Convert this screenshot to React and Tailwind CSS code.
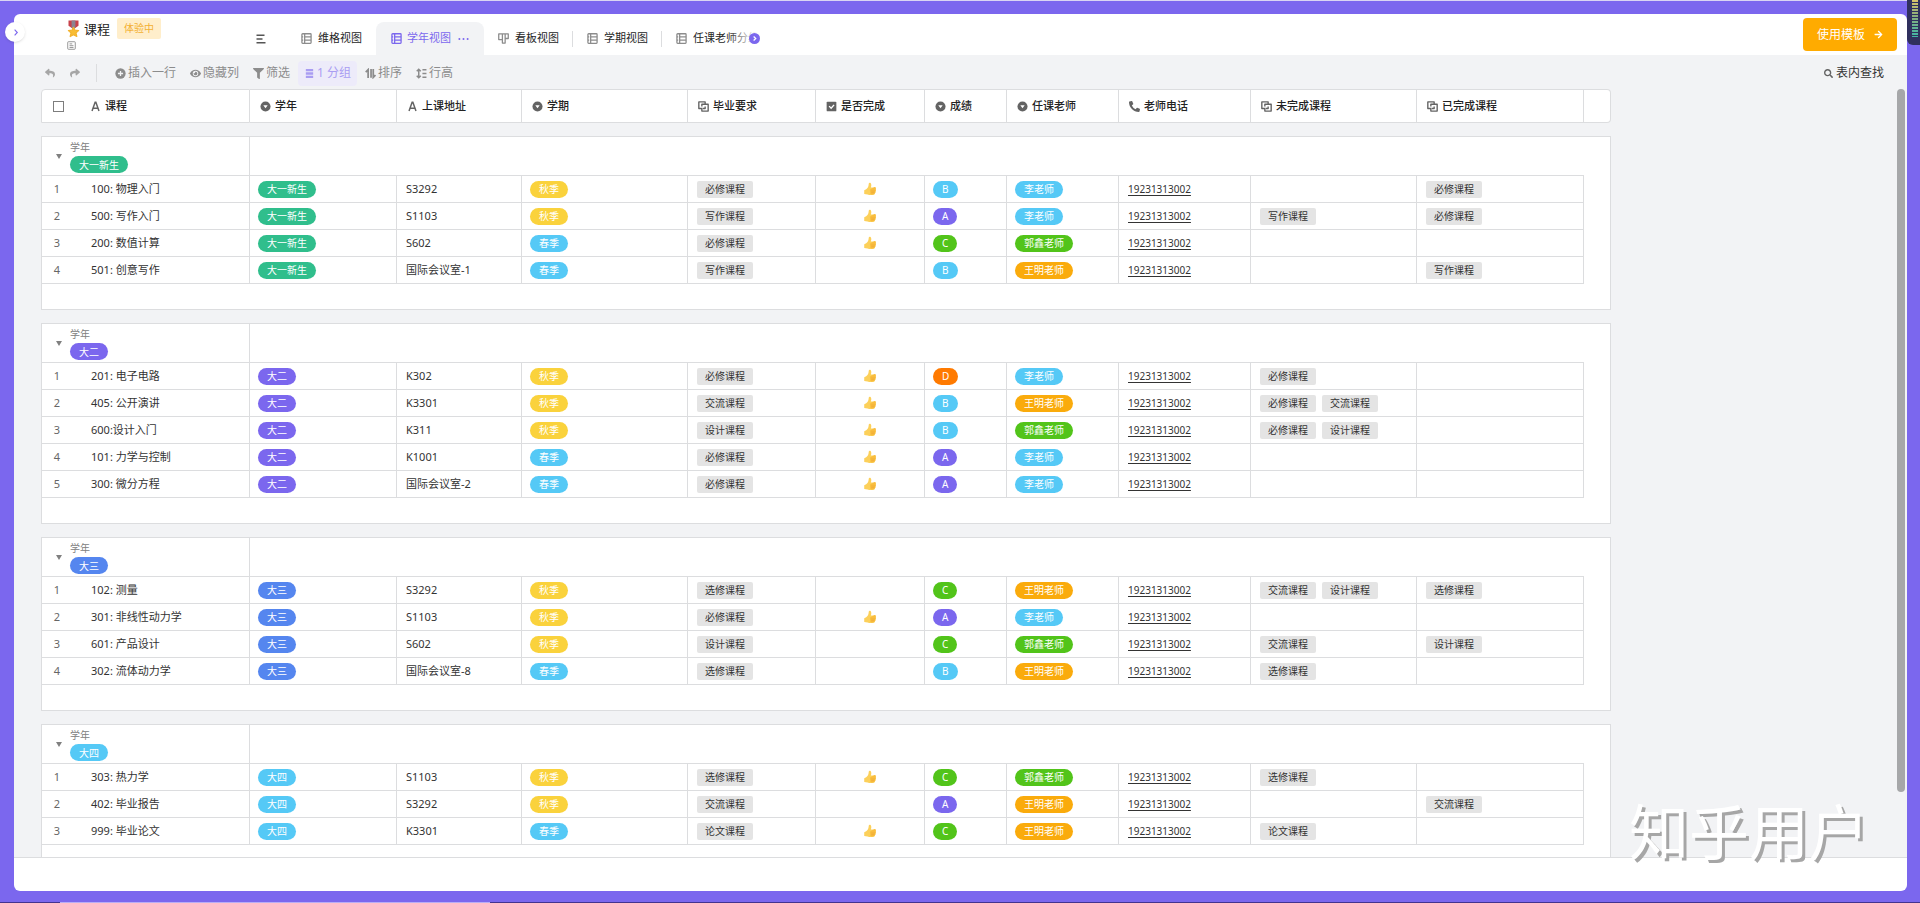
import { Fragment, useState } from "react";
import { FaArrowRight, FaEye, FaFilter, FaPhoneAlt, FaReply, FaSearch, FaShare } from "react-icons/fa";

const COLORS = {
  teal: "bg-[#30be8c]",
  purple: "bg-[#7b67ee]",
  blue: "bg-[#5586ef]",
  cyan: "bg-[#55c9f6]",
  yellow: "bg-[#fad23c]",
  green: "bg-[#52c41a]",
  amber: "bg-[#faab0c]",
  orange: "bg-[#ff7a00]",
};

const TERMS = { 秋季: "yellow", 春季: "cyan" };
const GRADES = { A: "purple", B: "cyan", C: "green", D: "orange" };
const TEACHERS = { 李老师: "cyan", 郭鑫老师: "green", 王明老师: "amber" };

const PHONE = "19231313002";

const COLUMNS = [
  { name: "学年", icon: "select", width: "w-[147px]" },
  { name: "上课地址", icon: "text", width: "w-[125px]" },
  { name: "学期", icon: "select", width: "w-[166px]" },
  { name: "毕业要求", icon: "link", width: "w-[128px]" },
  { name: "是否完成", icon: "check", width: "w-[109px]" },
  { name: "成绩", icon: "select", width: "w-[82px]" },
  { name: "任课老师", icon: "select", width: "w-[112px]" },
  { name: "老师电话", icon: "phone", width: "w-[132px]" },
  { name: "未完成课程", icon: "link", width: "w-[166px]" },
  { name: "已完成课程", icon: "link", width: "w-[167px]" },
];

// [course, room, term, requirement, done, grade, teacher, unfinished, finished]
const GROUPS = [
  {
    year: "大一新生",
    color: "teal",
    rows: [
      ["100: 物理入门", "S3292", "秋季", "必修课程", true, "B", "李老师", [], ["必修课程"]],
      ["500: 写作入门", "S1103", "秋季", "写作课程", true, "A", "李老师", ["写作课程"], ["必修课程"]],
      ["200: 数值计算", "S602", "春季", "必修课程", true, "C", "郭鑫老师", [], []],
      ["501: 创意写作", "国际会议室-1", "春季", "写作课程", false, "B", "王明老师", [], ["写作课程"]],
    ],
  },
  {
    year: "大二",
    color: "purple",
    rows: [
      ["201: 电子电路", "K302", "秋季", "必修课程", true, "D", "李老师", ["必修课程"], []],
      ["405: 公开演讲", "K3301", "秋季", "交流课程", true, "B", "王明老师", ["必修课程", "交流课程"], []],
      ["600:设计入门", "K311", "秋季", "设计课程", true, "B", "郭鑫老师", ["必修课程", "设计课程"], []],
      ["101: 力学与控制", "K1001", "春季", "必修课程", true, "A", "李老师", [], []],
      ["300: 微分方程", "国际会议室-2", "春季", "必修课程", true, "A", "李老师", [], []],
    ],
  },
  {
    year: "大三",
    color: "blue",
    rows: [
      ["102: 测量", "S3292", "秋季", "选修课程", false, "C", "王明老师", ["交流课程", "设计课程"], ["选修课程"]],
      ["301: 非线性动力学", "S1103", "秋季", "必修课程", true, "A", "李老师", [], []],
      ["601: 产品设计", "S602", "秋季", "设计课程", false, "C", "郭鑫老师", ["交流课程"], ["设计课程"]],
      ["302: 流体动力学", "国际会议室-8", "春季", "选修课程", false, "B", "王明老师", ["选修课程"], []],
    ],
  },
  {
    year: "大四",
    color: "cyan",
    rows: [
      ["303: 热力学", "S1103", "秋季", "选修课程", true, "C", "郭鑫老师", ["选修课程"], []],
      ["402: 毕业报告", "S3292", "秋季", "交流课程", false, "A", "王明老师", [], ["交流课程"]],
      ["999: 毕业论文", "K3301", "春季", "论文课程", true, "C", "王明老师", ["论文课程"], []],
    ],
  },
];

const GridIcon = () => (
  <svg viewBox="0 0 12 12" className="size-[11px] shrink-0" fill="none" stroke="currentColor" strokeWidth="1.4">
    <rect x="1" y="0.8" width="10" height="10.4" rx="0.8" />
    <path d="M4 1v10M4 4.2h7M4 7.7h7M1 4.2h1.4M1 7.7h1.4" />
  </svg>
);

const KanbanIcon = () => (
  <svg viewBox="0 0 12 12" className="size-[11px] shrink-0" fill="none" stroke="currentColor" strokeWidth="1.4">
    <path d="M.8 1h4v6.2h-4zM4.8 1h3v10h-3zM7.8 1h3.4v5H7.8z" strokeLinejoin="round" />
  </svg>
);

const ThumbIcon = () => (
  <svg viewBox="0 0 16 16" className="mx-auto size-[14px]" role="img" aria-label="已完成">
    <path
      d="M1.4 9.4c1.6-.6 3-1.4 3.9-2.8C6.4 5 6.3 3.5 6.6 1.7c.2-1.2 2.3-1.1 2.7.5.4 1.6 0 3-.3 4.2h4.3c1.6 0 1.8 1.7.9 2.2.9.6.8 1.9-.1 2.2.5.8.2 1.7-.6 1.9.3 1-.3 1.9-1.3 2-2.2.3-4.8.5-7-.3l-3.8-.6z"
      fill="#fcd05a"
    />
    <path
      d="M8.6 8.4c-.9.5-.9 1.5-.1 1.9-.7.5-.6 1.4.1 1.8-.6.6-.3 1.7.5 2 1.2.4 2.4.1 3.1-.1 1-.1 1.6-1 1.3-1.9.8-.2 1.1-1.1.6-1.9.9-.3 1-1.6.1-2.2.9-.5.7-2-.9-2.2z"
      fill="#f9bd3e"
    />
    <path d="M9.4 10.3h4.3M9.4 12.2h3.8" stroke="#e9a233" strokeWidth=".6" />
  </svg>
);

const MedalIcon = () => (
  <svg viewBox="0 0 13 18" className="h-[18px] w-[13px] shrink-0">
    <path d="M1.5.5h10v5.2L6.5 9.2 1.5 5.7z" fill="#c8414b" />
    <path d="M4.6.5h3.8v7.3L6.5 9.2 4.6 7.8z" fill="#8b8391" />
    <path
      d="M6.5 7.4l1.5 2.8 3.6.4-2.6 2.3.8 3.6-3.3-1.8-3.3 1.8.8-3.6L1.4 10.6l3.6-.4z"
      fill="#f8bd33"
      stroke="#f3b32e"
      strokeWidth="1.2"
      strokeLinejoin="round"
    />
  </svg>
);

function FieldIcon({ type }) {
  if (type === "phone") return <FaPhoneAlt className="size-[11px] shrink-0 text-[#636363]" />;
  return (
    <svg viewBox="0 0 12 12" className="size-[11px] shrink-0 text-[#636363]" fill="none" stroke="currentColor">
      {type === "text" && <path d="M2.2 11L5.6 1.4h.8L9.8 11M3.4 8h5.2" strokeWidth="1.6" />}
      {type === "select" && (
        <>
          <circle cx="6" cy="6" r="5.5" fill="currentColor" stroke="none" />
          <path d="M3.6 4.6h4.8L6 7.8z" fill="#fff" stroke="none" />
        </>
      )}
      {type === "link" && (
        <path d="M5 8.2H.9V1h6.9v2.4M4.2 6V3.6h6.9V11H4.2V8.6M7.8 6v2.2H5.4" strokeWidth="1.5" strokeLinejoin="round" />
      )}
      {type === "check" && (
        <>
          <rect x=".7" y=".7" width="10.6" height="10.6" rx="1" fill="currentColor" stroke="none" />
          <path d="M3.4 5.6l2.2 2.2 3.2-3.6" stroke="#fff" strokeWidth="1.5" />
        </>
      )}
    </svg>
  );
}

const InsertIcon = () => (
  <svg viewBox="0 0 12 12" className="size-[11px] shrink-0">
    <circle cx="6" cy="6" r="5.6" fill="currentColor" />
    <path d="M6 3.2v5.6M3.2 6h5.6" stroke="#f2f3f5" strokeWidth="1.4" />
  </svg>
);

const GroupIcon = () => (
  <svg viewBox="0 0 12 12" className="size-[11px] shrink-0" fill="currentColor">
    <path d="M2 1h8v2.6H2zM2 4.7h8v2.6H2zM2 8.4h8V11H2z" />
  </svg>
);

const SortIcon = () => (
  <svg viewBox="0 0 12 12" className="size-[11px] shrink-0" fill="none" stroke="currentColor" strokeWidth="1.9">
    <path d="M.8 4.4L3.4 1.8V11M6.6 1.2v9.4M9 1v9.2l2.4-2.6" />
  </svg>
);

const RowHeightIcon = () => (
  <svg viewBox="0 0 12 12" className="size-[11px] shrink-0" fill="none" stroke="currentColor" strokeWidth="1.6">
    <path d="M3 1.6v8.8M.8 3.6L3 1.4l2.2 2.2M.8 8.4L3 10.6l2.2-2.2M7 2h4.4M7 6h4.4M7 10h4.4" />
  </svg>
);

const Pill = ({ color, children }) => (
  <span className={`inline-flex h-[17px] items-center rounded-full px-[9px] text-[10px] text-white ${COLORS[color]}`}>
    {children}
  </span>
);

const LinkTags = ({ items }) => (
  <div className="flex gap-1.5">
    {items.map((item) => (
      <span key={item} className="flex h-[17px] items-center rounded-xs bg-[#e4e4e4] px-2 text-[10px] text-[#333]">
        {item}
      </span>
    ))}
  </div>
);

const Cell = ({ className = "px-[9px]", children }) => (
  <td className={`border-r border-b border-[#dcdddf] ${className}`}>{children}</td>
);

function Tab({ name, icon, active, divider, onClick }) {
  if (active) {
    return (
      <button onClick={onClick} className="flex h-[33px] items-center gap-[5px] rounded-t-lg bg-[#f2f3f5] px-[15px] text-[#7b67ee]">
        {icon}
        {name}
        <svg viewBox="0 0 12 4" className="ml-0.5 h-1 w-[11px]" fill="currentColor">
          <circle cx="1.5" cy="2" r="1.1" />
          <circle cx="6" cy="2" r="1.1" />
          <circle cx="10.5" cy="2" r="1.1" />
        </svg>
      </button>
    );
  }
  return (
    <button onClick={onClick} className="relative flex h-[33px] items-center gap-1.5 px-[14px] text-[#262626]">
      <span className="text-[#8c8c8c]">{icon}</span>
      {name}
      {divider && <span className="absolute right-0 h-4 w-px bg-[#dcdddf]" />}
    </button>
  );
}

function Header() {
  const [view, setView] = useState("学年视图");
  const tabs = [
    { name: "维格视图", icon: <GridIcon /> },
    { name: "学年视图", icon: <GridIcon /> },
    { name: "看板视图", icon: <KanbanIcon />, divider: true },
    { name: "学期视图", icon: <GridIcon />, divider: true },
  ];

  return (
    <header className="flex h-[41px] shrink-0 items-end">
      <div className="flex h-full w-[242px] shrink-0 flex-col pt-1 pl-[53px]">
        <div className="flex items-center">
          <MedalIcon />
          <h1 className="ml-1 text-[13px] leading-5 text-[#222]">课程</h1>
          <span className="ml-[7px] flex h-[21px] items-center rounded-xs bg-[#ffeecb] px-[7px] text-[10px] text-[#f3b032]">
            体验中
          </span>
        </div>
        <svg viewBox="0 0 10 10" className="mt-0.5 size-[9px] text-[#8c8c8c]" fill="none" stroke="currentColor">
          <rect x=".8" y=".8" width="8.4" height="8.4" rx=".8" />
          <path d="M2.8 3.2h3M2.8 5.2h4.4M2.8 7.2h4.4" />
        </svg>
      </div>

      <button aria-label="视图列表" className="mr-[21px] flex h-[33px] items-center text-[#555]">
        <svg viewBox="0 0 10 10" className="size-[10px]" stroke="currentColor" strokeWidth="1.4">
          <path d="M.5 1.2h8M.5 5h6M.5 8.8h9" />
        </svg>
      </button>

      <nav className="flex text-[11px]">
        {tabs.map((tab) => (
          <Tab key={tab.name} {...tab} active={view === tab.name} onClick={() => setView(tab.name)} />
        ))}
        <div className="flex h-[33px] items-center gap-1.5 pl-[14px] text-[#262626]">
          <span className="text-[#8c8c8c]">
            <GridIcon />
          </span>
          <div className="relative w-[67px] overflow-hidden whitespace-nowrap">
            任课老师分组
            <div className="absolute inset-y-0 right-0 flex w-8 items-center justify-end bg-linear-to-r from-transparent to-white to-90%">
              <button aria-label="更多视图" className="flex size-[11px] items-center justify-center rounded-full bg-[#7b67ee]">
                <svg viewBox="0 0 8 8" className="size-[7px]" fill="none" stroke="#fff" strokeWidth="1.4">
                  <path d="M3 1.8L5.4 4 3 6.2" />
                </svg>
              </button>
            </div>
          </div>
        </div>
      </nav>

      <button className="mr-[10px] mb-1 ml-auto flex h-[33px] items-center gap-[9px] rounded bg-[#ffab00] px-[14px] text-xs text-white">
        使用模板
        <FaArrowRight className="size-[9px]" />
      </button>
    </header>
  );
}

function Toolbar() {
  const tools = [
    { name: "插入一行", icon: <InsertIcon /> },
    { name: "隐藏列", icon: <FaEye className="size-[11px]" /> },
    { name: "筛选", icon: <FaFilter className="size-[11px]" /> },
    { name: "1 分组", icon: <GroupIcon />, active: true },
    { name: "排序", icon: <SortIcon /> },
    { name: "行高", icon: <RowHeightIcon /> },
  ];

  return (
    <div className="flex h-[34px] shrink-0 items-center pt-0.5 pr-[23px] pl-[31px] text-xs text-[#8c8c8c]">
      <button aria-label="撤销" className="text-[#a6a6a6]">
        <FaReply className="size-[10px]" />
      </button>
      <button aria-label="重做" className="ml-[15px] text-[#a6a6a6]">
        <FaShare className="size-[10px]" />
      </button>
      <span className="mx-4 h-[18px] w-px bg-[#dcdddf]" />
      <div className="-ml-1 flex gap-0.5">
        {tools.map((tool) => (
          <button
            key={tool.name}
            className={`flex h-[25px] items-center gap-0.5 rounded-sm px-1.5 ${
              tool.active ? "bg-[#edebfa] text-[#a99df2]" : ""
            }`}
          >
            {tool.icon}
            {tool.name}
          </button>
        ))}
      </div>
      <button className="ml-auto flex items-center gap-[3px] text-[#333]">
        <FaSearch className="size-[9px] text-[#636363]" />
        表内查找
      </button>
    </div>
  );
}

function Row({ row, index, group }) {
  const [course, room, term, requirement, done, grade, teacher, unfinished, finished] = row;
  return (
    <tr className="h-[27px] bg-white">
      <td className="border-r border-b border-l border-[#dcdddf]">
        <div className="flex">
          <span className="w-[30px] text-center text-[#666]">{index + 1}</span>
          <span className="pl-[19px]">{course}</span>
        </div>
      </td>
      <Cell className="px-2">
        <Pill color={group.color}>{group.year}</Pill>
      </Cell>
      <Cell>{room}</Cell>
      <Cell className="px-2">
        <Pill color={TERMS[term]}>{term}</Pill>
      </Cell>
      <Cell>
        <LinkTags items={[requirement]} />
      </Cell>
      <Cell>{done && <ThumbIcon />}</Cell>
      <Cell className="px-2">
        <Pill color={GRADES[grade]}>{grade}</Pill>
      </Cell>
      <Cell className="px-2">
        <Pill color={TEACHERS[teacher]}>{teacher}</Pill>
      </Cell>
      <Cell className="px-[9px] text-[10px]">
        <a href={`tel:${PHONE}`} className="underline underline-offset-2">
          {PHONE}
        </a>
      </Cell>
      <Cell>
        <LinkTags items={unfinished} />
      </Cell>
      <Cell>
        <LinkTags items={finished} />
      </Cell>
      <td className="border-r border-[#dcdddf]" />
    </tr>
  );
}

function CourseTable() {
  const [collapsed, setCollapsed] = useState([]);

  const toggle = (year) => {
    setCollapsed(collapsed.includes(year) ? collapsed.filter((y) => y !== year) : [...collapsed, year]);
  };

  return (
    <table className="w-[1570px] table-fixed border-separate border-spacing-0 text-[11px] leading-4 text-[#333]">
      <thead>
        <tr className="h-[34px] text-left text-[#222]">
          <th className="w-[209px] rounded-tl border border-[#dcdddf] bg-white p-0 font-medium">
            <div className="flex items-center">
              <span className="flex w-7 justify-end pr-1.5">
                <input
                  type="checkbox"
                  aria-label="全选"
                  className="size-[11px] appearance-none border border-[#7d7d7d] checked:bg-[#7b67ee]"
                />
              </span>
              <span className="flex items-center gap-1 pl-5">
                <FieldIcon type="text" />
                课程
              </span>
            </div>
          </th>
          {COLUMNS.map((col) => (
            <th key={col.name} className={`border-y border-r border-[#dcdddf] bg-white px-[10px] font-medium ${col.width}`}>
              <div className="flex items-center gap-1">
                <FieldIcon type={col.icon} />
                {col.name}
              </div>
            </th>
          ))}
          <th className="w-[27px] rounded-r border-y border-r border-[#dcdddf] bg-white" />
        </tr>
      </thead>
      <tbody>
        {GROUPS.map((group) => (
          <Fragment key={group.year}>
            <tr className="h-[14px]">
              <td colSpan={12} className="border-b border-[#dcdddf]" />
            </tr>
            <tr className="h-[39px] bg-white">
              <td className="border-r border-b border-l border-[#dcdddf]">
                <div className="flex items-center">
                  <button
                    aria-label={`折叠${group.year}`}
                    onClick={() => toggle(group.year)}
                    className="flex w-7 justify-end pr-2 text-[#808080]"
                  >
                    <svg viewBox="0 0 6 5" className="h-[5px] w-[6px]" fill="currentColor">
                      <path d="M0 0h6L3 5z" />
                    </svg>
                  </button>
                  <div className="flex flex-col items-start gap-px">
                    <span className="text-[10px] leading-4 text-[#808080]">学年</span>
                    <Pill color={group.color}>{group.year}</Pill>
                  </div>
                </div>
              </td>
              <td colSpan={10} className="border-b border-[#dcdddf]" />
              <td className="border-r border-[#dcdddf]" />
            </tr>
            {!collapsed.includes(group.year) &&
              group.rows.map((row, i) => <Row key={row[0]} row={row} index={i} group={group} />)}
            <tr className="h-[26px] bg-white">
              <td colSpan={12} className="border-x border-b border-[#dcdddf]" />
            </tr>
          </Fragment>
        ))}
      </tbody>
    </table>
  );
}

export default function App() {
  return (
    <div className="relative flex h-screen flex-col overflow-hidden bg-[#7b67ee] font-['Noto_Sans','Noto_Sans_CJK_SC',sans-serif]">
      <div className="h-px shrink-0 bg-[#d9d5f3]" />

      <div className="relative mt-[13px] mr-[13px] mb-[11px] ml-[14px] flex min-h-0 flex-1 flex-col rounded-md bg-white">
        <Header />
        <main className="flex min-h-0 flex-1 flex-col border-b border-[#dcdddf] bg-[#f2f3f5]">
          <Toolbar />
          <div className="flex min-h-0 flex-1 justify-between pr-0.5 pl-[27px]">
            <div className="overflow-hidden">
              <CourseTable />
            </div>
            <div className="mb-[65px] w-2 rounded-full bg-[#a6a7a9]" />
          </div>
        </main>
        <footer className="h-[33px] shrink-0" />

        <button
          aria-label="展开目录"
          className="absolute top-2 -left-[9px] flex size-5 items-center justify-center rounded-full bg-white text-[#7b67ee] shadow-sm"
        >
          <svg viewBox="0 0 8 8" className="size-[7px]" fill="none" stroke="currentColor" strokeWidth="1.3">
            <path d="M3 .8L6 4 3 7.2" />
          </svg>
        </button>
        <p className="pointer-events-none absolute right-[38px] bottom-[29px] text-[60px] leading-none text-white [text-shadow:3px_3px_0_#a6a6a6]">
          知乎用户
        </p>
      </div>

      <div className="flex h-px shrink-0 bg-[#43348f]">
        <div className="ml-[60px] w-[430px] bg-[#b9aef5]" />
      </div>

      <div className="absolute top-0 right-0 h-[45px] w-[13px] rounded-bl-md bg-[#30305e] pl-[5px]">
        <div className="h-[37px] w-[6px] bg-[repeating-linear-gradient(to_bottom,transparent_0_2px,#30305e_2px_3px),linear-gradient(to_bottom,#d9c36a,#8fae7a_40%,#3fb5a5)]" />
      </div>
    </div>
  );
}
